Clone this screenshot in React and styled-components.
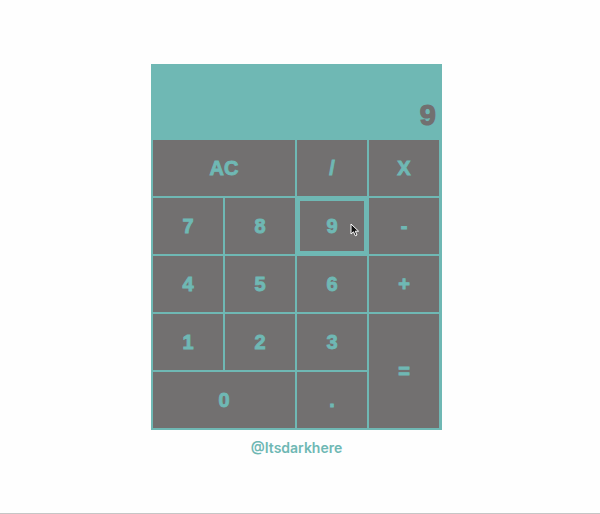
import React, { useState } from 'react';
import styled, { createGlobalStyle } from 'styled-components';

const GlobalStyle = createGlobalStyle`
  html, body {
    margin: 0;
    padding: 0;
    background: #fefefe;
  }
  * {
    box-sizing: border-box;
  }
`;

const Page = styled.div`
  width: 600px;
  height: 514px;
  display: flex;
  flex-direction: column;
  align-items: center;
  padding: 64px 7px 0 0;
  border-bottom: 1px solid #c6c6c6;
  font-family: 'Liberation Sans', Arial, sans-serif;
`;

const Calculator = styled.div`
  width: 291px;
  background: #6fb8b4;
  padding: 1px 2px 1px 1px;
  display: grid;
  grid-template-columns: repeat(4, 72px);
  grid-template-rows: 74px repeat(5, 58px);
`;

const Display = styled.div`
  grid-column: 1 / -1;
  display: flex;
  align-items: flex-end;
  justify-content: flex-end;
  padding: 0 4px 9px 0;
  color: #727070;
  font-size: 29px;
  font-weight: 900;
  line-height: 1;
  -webkit-text-stroke: 1.2px currentColor;
`;

const Key = styled.button`
  position: relative;
  grid-column: span ${(p) => p.$wide ? 2 : 1};
  grid-row: span ${(p) => p.$tall ? 2 : 1};
  background: #727070;
  border: ${(p) => (p.$active ? 4 : 1)}px solid #6fb8b4;
  color: #6fb8b4;
  font-family: 'Liberation Sans', Arial, sans-serif;
  font-size: 20px;
  font-weight: 900;
  -webkit-text-stroke: 0.9px currentColor;
  padding: 0;
  cursor: pointer;
  outline: none;
`;

const Pointer = styled.svg`
  position: absolute;
  left: 50px;
  top: 22px;
  width: 10px;
  height: 14px;
  pointer-events: none;
`;

const Credit = styled.div`
  margin-top: 9px;
  color: #6fb8b4;
  font-family: Inter, 'Noto Sans', sans-serif;
  font-size: 14px;
  font-weight: 600;
`;

const keys = [
  { label: 'AC', wide: true },
  { label: '/' },
  { label: 'X' },
  { label: '7' },
  { label: '8' },
  { label: '9', active: true },
  { label: '-' },
  { label: '4' },
  { label: '5' },
  { label: '6' },
  { label: '+' },
  { label: '1' },
  { label: '2' },
  { label: '3' },
  { label: '=', tall: true },
  { label: '0', wide: true },
  { label: '.' },
];

const App = () => {
  const [value, setValue] = useState('9');

  return (
    <Page>
      <GlobalStyle />
      <Calculator>
        <Display>{value}</Display>
        {keys.map((k) => (
          <Key
            key={k.label}
            $wide={k.wide}
            $tall={k.tall}
            $active={k.active}
            onClick={() => setValue(k.label)}
          >
            {k.label}
            {k.active && (
              <Pointer viewBox="0 0 10 14">
                <path d="M1 1 L1 11 L3.5 8.8 L5.3 12.8 L7 12 L5.3 8.2 L8.6 8.2 Z" fill="#111" stroke="#fff" strokeWidth="1" />
              </Pointer>
            )}
          </Key>
        ))}
      </Calculator>
      <Credit>@Itsdarkhere</Credit>
    </Page>
  );
};

export default App;
